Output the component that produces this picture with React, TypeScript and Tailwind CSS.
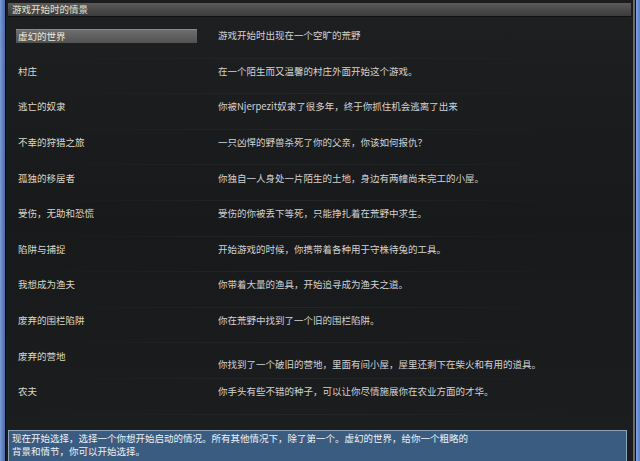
const rows: { name: string; desc: string; late?: boolean }[] = [
  { name: "虚幻的世界", desc: "游戏开始时出现在一个空旷的荒野" },
  { name: "村庄", desc: "在一个陌生而又温馨的村庄外面开始这个游戏。" },
  { name: "逃亡的奴隶", desc: "你被Njerpezit奴隶了很多年，终于你抓住机会逃离了出来" },
  { name: "不幸的狩猎之旅", desc: "一只凶悍的野兽杀死了你的父亲，你该如何报仇？" },
  { name: "孤独的移居者", desc: "你独自一人身处一片陌生的土地，身边有两幢尚未完工的小屋。" },
  { name: "受伤，无助和恐慌", desc: "受伤的你被丢下等死，只能挣扎着在荒野中求生。" },
  { name: "陷阱与捕捉", desc: "开始游戏的时候，你携带着各种用于守株待兔的工具。" },
  { name: "我想成为渔夫", desc: "你带着大量的渔具，开始追寻成为渔夫之道。" },
  { name: "废弃的围栏陷阱", desc: "你在荒野中找到了一个旧的围栏陷阱。" },
  { name: "废弃的营地", desc: "你找到了一个破旧的营地，里面有间小屋，屋里还剩下在柴火和有用的道具。", late: true },
  { name: "农夫", desc: "你手头有些不错的种子，可以让你尽情施展你在农业方面的才华。" },
];

const font = { fontFamily: '"Noto Sans CJK SC", "DejaVu Sans", sans-serif' };

export default function App() {
  return (
    <div
      className="w-[640px] h-[461px] overflow-hidden bg-gradient-to-r from-[#5b7fc0] via-[#2f4a78] to-[#6d93dc] flex text-[9.5px] leading-none"
      style={font}
    >
      {/* left window frame */}
      <div className="w-[5px] shrink-0 bg-gradient-to-r from-[#7a9cd6] to-[#4a6aa8]" />

      <div className="flex-1 flex flex-col bg-[#1b1c1d] border-l border-[#0c0c0c]">
        {/* title bar */}
        <div className="mt-[3px] mx-[2px] h-[14px] flex items-center pl-[4px] bg-gradient-to-b from-[#5a5a5a] to-[#3b3b3b] border-b border-[#111] text-[#e6e2c8]">
          游戏开始时的情景
        </div>

        {/* scenario list */}
        <div className="flex-1 pt-[12px] relative bg-[linear-gradient(180deg,#1e1f21_0%,#18191b_50%,#1c1d1f_100%)]">
          {rows.map((r, i) => (
            <div key={r.name} className="h-[35.6px] flex relative">
              <div className="w-[212px] shrink-0 pl-[10px]">
                <div
                  className={
                    i === 0
                      ? "w-[181px] h-[14px] flex items-center pl-[2px] bg-gradient-to-b from-[#6e6e6e] to-[#525252] border-t border-[#8a8a8a] text-[#eeeadb]"
                      : "h-[14px] flex items-center pl-[2px] text-[#dcd8c4]"
                  }
                >
                  {r.name}
                </div>
              </div>
              <div className={`h-[14px] flex items-center text-[#d2d2d2] ${r.late ? "mt-[8px]" : ""}`}>
                {r.desc}
              </div>
              {/* faint separator streak */}
              <div className="absolute left-[30px] right-[60px] bottom-[6px] h-px bg-gradient-to-r from-transparent via-[#252628] to-transparent" />
            </div>
          ))}
        </div>

        {/* hint panel */}
        <div className="h-[31px] mx-[2px] mr-[6px] px-[3px] pt-px bg-[#3a5c80] border-t border-l border-r border-[#8fa3b8] text-[#eef2f6] leading-[13px]">
          <div>现在开始选择，选择一个你想开始启动的情况。所有其他情况下，除了第一个。虚幻的世界，给你一个粗略的</div>
          <div>背景和情节，你可以开始选择。</div>
        </div>
      </div>

      {/* right window frame */}
      <div className="w-[2px] shrink-0 bg-[#6a6a6a]" />
      <div className="w-[1px] shrink-0 bg-[#111]" />
      <div className="w-[4px] shrink-0 bg-gradient-to-r from-[#7fa4e8] to-[#5a7fc8]" />
    </div>
  );
}
